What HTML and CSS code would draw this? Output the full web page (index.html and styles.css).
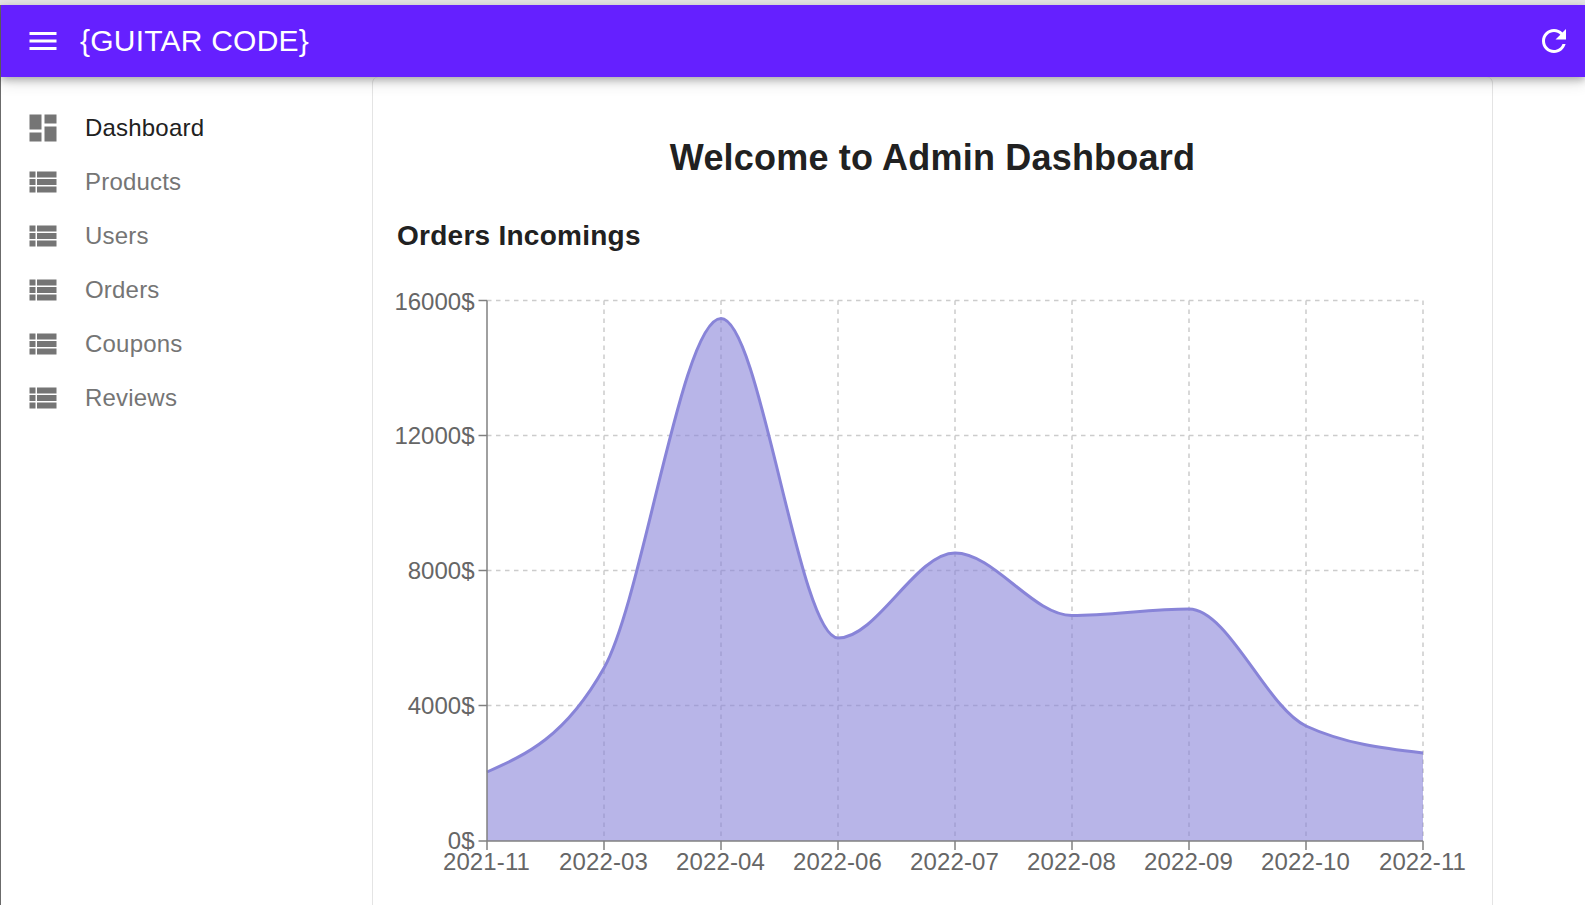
FILE: index.html
```html
<!DOCTYPE html>
<html lang="en">
<head>
<meta charset="utf-8">
<title>Guitar Code Admin</title>
<link rel="stylesheet" href="styles.css">
</head>
<body>
<div class="browser-strip"></div>
<div class="app">
  <header class="appbar">
    <div class="appbar-left">
      <svg class="icon icon-white" viewBox="0 0 24 24"><path d="M3 18h18v-2H3v2zm0-5h18v-2H3v2zm0-7v2h18V6H3z"/></svg>
      <span class="title">{GUITAR CODE}</span>
    </div>
    <svg class="icon icon-white" viewBox="0 0 24 24"><path d="M17.65 6.35C16.2 4.9 14.21 4 12 4c-4.42 0-7.99 3.58-7.99 8s3.57 8 7.99 8c3.73 0 6.84-2.55 7.73-6h-2.08c-.82 2.33-3.04 4-5.65 4-3.31 0-6-2.69-6-6s2.69-6 6-6c1.66 0 3.14.69 4.22 1.78L13 11h7V4l-2.35 2.35z"/></svg>
  </header>
  <div class="content">
    <nav class="sidebar">
      <a class="nav-item active"><svg class="icon" viewBox="0 0 24 24"><path d="M3 13h8V3H3v10zm0 8h8v-6H3v6zm10 0h8V11h-8v10zm0-18v6h8V3h-8z"/></svg><span>Dashboard</span></a>
      <a class="nav-item"><svg class="icon" viewBox="0 0 24 24"><path d="M3 14h4v-4H3v4zm0 5h4v-4H3v4zM3 9h4V5H3v4zm5 5h13v-4H8v4zm0 5h13v-4H8v4zM8 5v4h13V5H8z"/></svg><span>Products</span></a>
      <a class="nav-item"><svg class="icon" viewBox="0 0 24 24"><path d="M3 14h4v-4H3v4zm0 5h4v-4H3v4zM3 9h4V5H3v4zm5 5h13v-4H8v4zm0 5h13v-4H8v4zM8 5v4h13V5H8z"/></svg><span>Users</span></a>
      <a class="nav-item"><svg class="icon" viewBox="0 0 24 24"><path d="M3 14h4v-4H3v4zm0 5h4v-4H3v4zM3 9h4V5H3v4zm5 5h13v-4H8v4zm0 5h13v-4H8v4zM8 5v4h13V5H8z"/></svg><span>Orders</span></a>
      <a class="nav-item"><svg class="icon" viewBox="0 0 24 24"><path d="M3 14h4v-4H3v4zm0 5h4v-4H3v4zM3 9h4V5H3v4zm5 5h13v-4H8v4zm0 5h13v-4H8v4zM8 5v4h13V5H8z"/></svg><span>Coupons</span></a>
      <a class="nav-item"><svg class="icon" viewBox="0 0 24 24"><path d="M3 14h4v-4H3v4zm0 5h4v-4H3v4zM3 9h4V5H3v4zm5 5h13v-4H8v4zm0 5h13v-4H8v4zM8 5v4h13V5H8z"/></svg><span>Reviews</span></a>
    </nav>
    <main class="panel">
      <h1 class="heading">Welcome to Admin Dashboard</h1>
      <h2 class="subheading">Orders Incomings</h2>
      <svg class="chart" viewBox="373 280 1119 625" width="1119" height="625">
        <g class="grid">
          <line x1="487" y1="299.5" x2="1423" y2="299.5"/>
          <line x1="487" y1="434.5" x2="1423" y2="434.5"/>
          <line x1="487" y1="569.5" x2="1423" y2="569.5"/>
          <line x1="487" y1="704.5" x2="1423" y2="704.5"/>
          <line x1="604" y1="299.5" x2="604" y2="840"/>
          <line x1="721" y1="299.5" x2="721" y2="840"/>
          <line x1="838" y1="299.5" x2="838" y2="840"/>
          <line x1="955" y1="299.5" x2="955" y2="840"/>
          <line x1="1072" y1="299.5" x2="1072" y2="840"/>
          <line x1="1189" y1="299.5" x2="1189" y2="840"/>
          <line x1="1306" y1="299.5" x2="1306" y2="840"/>
          <line x1="1423" y1="299.5" x2="1423" y2="840"/>
        </g>
        <path class="area-fill" d="M487,771C526,753.7 565,736.3 604,667C643,597.7 682,317.5 721,317.5C760,317.5 799,637 838,637C877,637 916,552 955,552C994,552 1033,614.5 1072,614.5C1111,614.5 1150,608 1189,608C1228,608 1267,707 1306,725C1345,743 1384,747.5 1423,752L1423,840L487,840Z"/>
        <path class="area-line" d="M487,771C526,753.7 565,736.3 604,667C643,597.7 682,317.5 721,317.5C760,317.5 799,637 838,637C877,637 916,552 955,552C994,552 1033,614.5 1072,614.5C1111,614.5 1150,608 1189,608C1228,608 1267,707 1306,725C1345,743 1384,747.5 1423,752"/>
        <g class="axis">
          <line x1="487" y1="299.5" x2="487" y2="840"/>
          <line x1="487" y1="840" x2="1423" y2="840"/>
          <line x1="478.5" y1="299.5" x2="487" y2="299.5"/>
          <line x1="478.5" y1="434.5" x2="487" y2="434.5"/>
          <line x1="478.5" y1="569.5" x2="487" y2="569.5"/>
          <line x1="478.5" y1="704.5" x2="487" y2="704.5"/>
          <line x1="478.5" y1="840" x2="487" y2="840"/>
          <line x1="487" y1="840" x2="487" y2="849"/>
          <line x1="604" y1="840" x2="604" y2="849"/>
          <line x1="721" y1="840" x2="721" y2="849"/>
          <line x1="838" y1="840" x2="838" y2="849"/>
          <line x1="955" y1="840" x2="955" y2="849"/>
          <line x1="1072" y1="840" x2="1072" y2="849"/>
          <line x1="1189" y1="840" x2="1189" y2="849"/>
          <line x1="1306" y1="840" x2="1306" y2="849"/>
          <line x1="1423" y1="840" x2="1423" y2="849"/>
        </g>
        <g class="labels-y">
          <text x="474.5" y="309">16000$</text>
          <text x="474.5" y="443">12000$</text>
          <text x="474.5" y="578">8000$</text>
          <text x="474.5" y="713">4000$</text>
          <text x="474.5" y="848">0$</text>
        </g>
        <g class="labels-x">
          <text x="486.5" y="869">2021-11</text>
          <text x="603.5" y="869">2022-03</text>
          <text x="720.5" y="869">2022-04</text>
          <text x="837.5" y="869">2022-06</text>
          <text x="954.5" y="869">2022-07</text>
          <text x="1071.5" y="869">2022-08</text>
          <text x="1188.5" y="869">2022-09</text>
          <text x="1305.5" y="869">2022-10</text>
          <text x="1422.5" y="869">2022-11</text>
        </g>
      </svg>
    </main>
  </div>
</div>
</body>
</html>
```

FILE: styles.css
```css
html, body {
  margin: 0;
  height: 100%;
  overflow: hidden;
  background: #fff;
  font-family: "Liberation Sans", Arial, sans-serif;
}
.browser-strip {
  height: 5px;
  background: #e3e3e3;
}
.app {
  height: 900px;
  border-left: 1px solid #6b6b6b;
  display: flex;
  flex-direction: column;
}
.appbar {
  height: 72px;
  flex: none;
  background: #6520ff;
  color: #fff;
  display: flex;
  align-items: center;
  justify-content: space-between;
  padding: 0 13px 0 24px;
  box-shadow: 0 3px 7px rgba(0, 0, 0, .25), 0 6px 14px rgba(0, 0, 0, .12);
  position: relative;
  z-index: 2;
}
.appbar-left {
  display: flex;
  align-items: center;
  gap: 19px;
}
.title {
  font-size: 30px;
  line-height: 36px;
  letter-spacing: .22px;
}
.icon {
  width: 36px;
  height: 36px;
  flex: none;
  fill: #757575;
}
.icon-white {
  fill: #fff;
}
.content {
  flex: 1;
  display: flex;
  min-height: 0;
}
.sidebar {
  width: 371px;
  flex: none;
  padding-top: 24px;
  box-sizing: border-box;
}
.nav-item {
  height: 54px;
  display: flex;
  align-items: center;
  gap: 24px;
  padding-left: 24px;
  font-size: 24px;
  letter-spacing: .2px;
  color: #757575;
}
.nav-item.active {
  color: #212121;
}
.panel {
  width: 1121px;
  height: 840px;
  flex: none;
  box-sizing: border-box;
  border: 1px solid #e4e4e4;
  border-top: 0;
  border-radius: 6px 6px 0 0;
  padding: 0;
}
.heading {
  margin: 59px 0 0;
  font-size: 36px;
  line-height: 44px;
  font-weight: 700;
  letter-spacing: .2px;
  text-align: center;
  color: #212121;
}
.subheading {
  margin: 38px 0 0 24px;
  font-size: 28px;
  line-height: 36px;
  font-weight: 700;
  letter-spacing: .26px;
  color: #212121;
}
.chart {
  display: block;
  margin-top: 27px;
  overflow: visible;
}
.grid line {
  stroke: #ccc;
  stroke-width: 1.5;
  stroke-dasharray: 4.5 4.5;
}
.area-fill {
  fill: #8884d8;
  fill-opacity: .6;
}
.area-line {
  fill: none;
  stroke: #8884d8;
  stroke-width: 3;
}
.axis line {
  stroke: #808080;
  stroke-width: 1.5;
}
.labels-y text, .labels-x text {
  fill: #666;
  font-size: 24px;
}
.labels-x text {
  letter-spacing: .12px;
}
.labels-y text {
  text-anchor: end;
}
.labels-x text {
  text-anchor: middle;
}
```
